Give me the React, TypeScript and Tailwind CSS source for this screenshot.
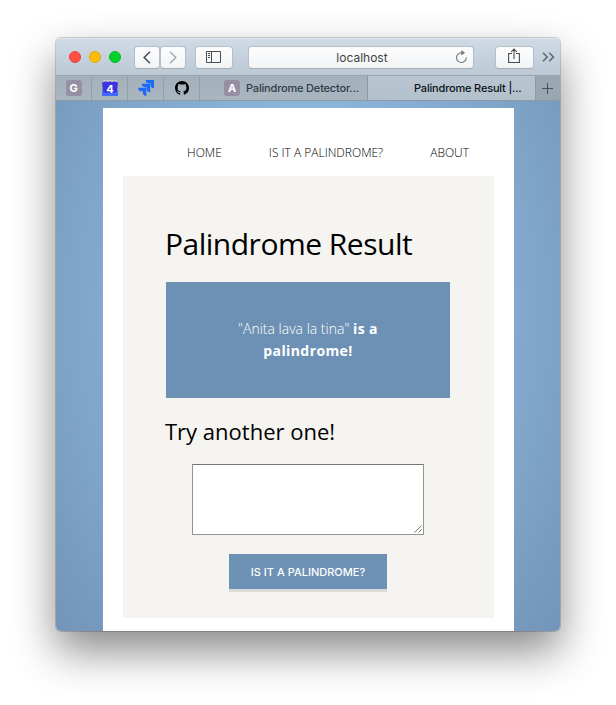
import React from "react";

const toolButton =
  "flex h-[23px] items-center justify-center rounded-[4px] border border-[#b3c0cb] border-b-[#9fadb8] bg-linear-to-b from-[#fdfdfe] to-[#f2f4f6]";

function Toolbar() {
  return (
    <div className="flex h-[38px] items-center border-b border-[#97a5b0] border-t border-t-[#dfe6ec] bg-linear-to-b from-[#cfdae4] to-[#bcc9d4] pl-[13px]">
      <div className="flex gap-2">
        <span className="size-3 rounded-full border border-[#e2443e] bg-[#ff4f47]" />
        <span className="size-3 rounded-full border border-[#e0a416] bg-[#ffbd05]" />
        <span className="size-3 rounded-full border border-[#0fb327] bg-[#00d42b]" />
      </div>
      <div className="ml-[13px] flex">
        <button className={`${toolButton} w-[26px]`}>
          <svg width="8" height="13" viewBox="0 0 8 13" fill="none" stroke="#4c4f52" strokeWidth="1.6">
            <path d="M7 .8 1.2 6.5 7 12.2" />
          </svg>
        </button>
        <button className={`${toolButton} w-[26px]`}>
          <svg width="8" height="13" viewBox="0 0 8 13" fill="none" stroke="#a9adb1" strokeWidth="1.6">
            <path d="M1 .8 6.8 6.5 1 12.2" />
          </svg>
        </button>
      </div>
      <button className={`${toolButton} ml-[9px] w-[38px]`}>
        <svg className="-ml-px" width="15" height="12" viewBox="0 0 15 12" fill="none" stroke="#4c4f52">
          <path d="M.5 .5h14v11H.5zM5.5 .5v11M2 2.500h2M2 4.500h2M2 6.500h2" />
        </svg>
      </button>
      <div className={`${toolButton} relative ml-[15px] w-[226px] pl-0.5 pt-0.5 font-['Inter','Liberation_Sans',sans-serif] text-[12px] text-[#3f4245]`}>
        localhost
        <svg className="absolute right-[5px] top-[3px]" width="13" height="14" viewBox="0 0 13 14" fill="none" stroke="#737679" strokeWidth="1.1">
          <path d="M7 2.7H6.2A4.9 4.9 0 1 0 11.300 7.500" />
          <path d="M6.300 0v5.400L10 2.700z" fill="#737679" stroke="none" />
        </svg>
      </div>
      <button className={`${toolButton} ml-[21px] w-[39px]`}>
        <svg className="-ml-px -mt-0.5" width="12" height="16" viewBox="0 0 12 16" fill="none" stroke="#4c4f52" strokeWidth="1.1">
          <path d="M4 5.500H.6v9h10.800v-9H8M6 11V1.200M3.200 3.900 6 1.100l2.800 2.800" />
        </svg>
      </button>
      <svg className="ml-2" width="13" height="10" viewBox="0 0 13 10" fill="none" stroke="#5b6670" strokeWidth="1.5">
        <path d="M1 .8 5.200 5 1 9.200M7.200 .8 11.400 5 7.200 9.200" />
      </svg>
    </div>
  );
}

function Letter({ children }: { children: string }) {
  return (
    <span className="flex size-4 shrink-0 items-center justify-center rounded-[3px] bg-[#968fa3] font-['Inter',sans-serif] text-[11px] font-bold text-white">
      {children}
    </span>
  );
}

function Tabs() {
  const pinned = "flex w-9 items-center justify-center border-r border-[#92a0aa]";
  return (
    <div className="flex h-[25px] border-b border-[#8c9aa6] bg-linear-to-b from-[#a4b0ba] to-[#a9b5bf] font-['Inter','Liberation_Sans',sans-serif] text-[11px] font-medium tracking-[-0.18px]">
      <div className={pinned}><Letter>G</Letter></div>
      <div className={pinned}>
        <svg width="16" height="16" viewBox="0 0 16 16">
          <path d="M1.500 0h13v3h-13z" fill="#c9c9cf" />
          <path d="M0 2q2 .8 3-.4h2q1 1.300 2 0h2q1 1.300 2 0h2q1 1.200 3 .4l-.7 7 .7 7H0l.7-7z" fill="#3c35df" />
          <path d="M0 11l4 2h8l4-2v5H0z" fill="#416bff" />
          <text x="8" y="13" textAnchor="middle" fill="white" fontSize="11" fontWeight="700" fontFamily="Inter, sans-serif">4</text>
        </svg>
      </div>
      <div className={pinned}>
        <svg width="16" height="16" viewBox="0 0 24 24" fill="#1b6bf8">
          <path d="M11.571 11.513H0a5.218 5.218 0 0 0 5.232 5.215h2.130v2.057A5.215 5.215 0 0 0 12.575 24V12.518a1.005 1.005 0 0 0-1.005-1.005z" />
          <path d="M17.294 5.757H5.736a5.215 5.215 0 0 0 5.215 5.214h2.129v2.058a5.218 5.218 0 0 0 5.215 5.214V6.758a1.001 1.001 0 0 0-1.001-1.001z" />
          <path d="M23.013 0H11.455a5.215 5.215 0 0 0 5.215 5.215h2.129v2.057A5.215 5.215 0 0 0 24 12.483V1.005A1.001 1.001 0 0 0 23.013 0z" />
        </svg>
      </div>
      <div className={pinned}>
        <svg width="14" height="14" viewBox="0 0 16 16" fill="black">
          <path d="M8 0C3.580 0 0 3.580 0 8c0 3.540 2.290 6.530 5.470 7.590.4.070.55-.17.55-.38 0-.19-.01-.82-.01-1.490-2.010.37-2.530-.49-2.690-.94-.09-.23-.48-.94-.82-1.130-.28-.15-.68-.52-.01-.53.63-.01 1.080.58 1.230.82.72 1.210 1.870.87 2.330.66.07-.52.28-.87.51-1.070-1.780-.2-3.640-.89-3.640-3.950 0-.87.31-1.590.82-2.150-.08-.2-.36-1.020.08-2.120 0 0 .67-.21 2.200.82.64-.18 1.320-.27 2-.27s1.360.09 2 .27c1.530-1.040 2.200-.82 2.200-.82.44 1.100.16 1.920.08 2.120.51.56.82 1.270.82 2.150 0 3.070-1.870 3.750-3.650 3.950.29.25.54.73.54 1.480 0 1.070-.01 1.930-.01 2.200 0 .21.15.46.55.38A8.010 8.010 0 0 0 16 8c0-4.420-3.580-8-8-8z" />
        </svg>
      </div>
      <div className="flex w-[168px] items-center gap-1.5 border-r border-[#8c9aa6] pl-6 text-[#303b45]">
        <Letter>A</Letter>
        <span className="whitespace-nowrap">Palindrome Detector...</span>
      </div>
      <div className="flex w-[168px] items-center border-r border-[#8c9aa6] bg-linear-to-b from-[#b9c6d1] to-[#b3c1cc] pl-[46px] text-[#0b1218]">
        <span className="whitespace-nowrap">Palindrome Result |...</span>
      </div>
      <div className="flex w-6 items-center justify-center bg-[#9aa7b2] pr-0.5">
        <svg width="11" height="11" viewBox="0 0 11 11" stroke="#46515b" strokeWidth="1">
          <path d="M5.500 0v11M0 5.500h11" />
        </svg>
      </div>
    </div>
  );
}

export default function App() {
  return (
    <div className="h-[705px] w-[616px] overflow-hidden bg-white pl-14 pt-[38px] font-['Open_Sans','Noto_Sans',sans-serif]">
      <div className="h-[593px] w-[504px] rounded-[5px] shadow-[0_0_0_1px_rgba(0,0,0,0.17),0_20px_44px_rgba(0,0,0,0.47)]">
        <div className="flex h-full flex-col overflow-hidden rounded-[5px]">
          <Toolbar />
          <Tabs />
          <div className="flex-1 bg-[radial-gradient(400px_560px_at_50%_40%,#9dccf0_0%,#6a8aae_100%)] px-[47px] pt-[7px] pr-[46px]">
            <main className="h-full bg-white px-5">
              <nav className="flex h-[68px] items-center justify-end gap-[47px] pr-[25px] pt-[22px] text-[12px] font-light text-black">
                <a>HOME</a>
                <a>IS IT A PALINDROME?</a>
                <a>ABOUT</a>
              </nav>
              <section className="h-[442px] bg-[#f5f4f0] px-[43px] pt-[47px] pr-11">
                <h1 className="-ml-px h-[59px] text-[30px] leading-[42px] tracking-[-0.5px] text-black">Palindrome Result</h1>
                <div className="flex h-[116px] flex-col items-center justify-center bg-[#6d91b4] text-center text-[14px] font-light leading-[22px] text-white">
                  <p>
                    "Anita lava la tina" <b className="font-bold tracking-[0.4px]">is a</b>
                  </p>
                  <p className="font-bold tracking-[0.4px]">palindrome!</p>
                </div>
                <h2 className="-ml-px mt-[17px] h-[49px] text-[22px] leading-8 text-black">Try another one!</h2>
                <form className="flex flex-col items-center">
                  <div className="relative h-[71px] w-[232px]">
                    <textarea className="block size-full resize-none border border-[#949494] border-t-[#767676] bg-white" />
                    <svg className="absolute bottom-0.5 right-0.5" width="8" height="8" viewBox="0 0 8 8" stroke="#555" strokeWidth=".8">
                      <path d="M.5 7.500l7-7M4.500 7.500l3-3" />
                    </svg>
                  </div>
                  <button type="button" className="mt-[19px] h-[35px] w-[158px] bg-[#6d91b4] pt-0.5 font-['Inter',sans-serif] text-[11px] font-medium text-white shadow-[0_3px_0_#dcdad8]">
                    IS IT A PALINDROME?
                  </button>
                </form>
              </section>
            </main>
          </div>
        </div>
      </div>
    </div>
  );
}
